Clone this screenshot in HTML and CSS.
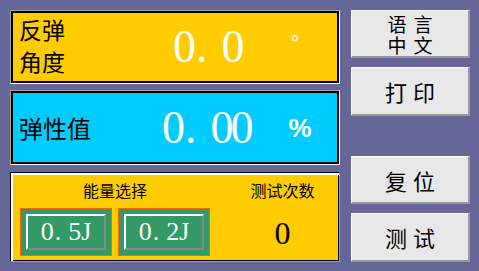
FILE: index.html
```html
<!DOCTYPE html>
<html lang="zh-CN">
<head>
    <meta charset="UTF-8">
    <title>回弹测试</title>
    <link rel="stylesheet" href="styles.css">
</head>
<body>
    <div class="screen">
        <div class="left">
            <!-- 反弹角度 -->
            <div class="panel panel-angle">
                <div class="label label-angle">反弹<br>角度</div>
                <div class="reading">0<span class="dot">.</span>0</div>
                <div class="unit-degree">°</div>
            </div>

            <!-- 弹性值 -->
            <div class="panel panel-elastic">
                <div class="label label-elastic">弹性值</div>
                <div class="reading">0<span class="dot">.</span>00</div>
                <div class="unit-percent">%</div>
            </div>

            <!-- 能量选择 / 测试次数 -->
            <div class="panel panel-count">
                <div class="energy">
                    <div class="title">能量选择</div>
                    <div class="energy-buttons">
                        <div class="energy-btn"><span>0<i>.</i>5J</span></div>
                        <div class="energy-btn"><span>0<i>.</i>2J</span></div>
                    </div>
                </div>
                <div class="counter">
                    <div class="title">测试次数</div>
                    <div class="count">0</div>
                </div>
            </div>
        </div>

        <div class="right">
            <button class="key key-lang"><span>语言</span><span>中文</span></button>
            <button class="key key-print">打印</button>
            <button class="key key-reset">复位</button>
            <button class="key key-test">测试</button>
        </div>
    </div>
</body>
</html>
```

FILE: styles.css
```css
body {
    margin: 0;
    width: 479px;
    height: 271px;
    overflow: hidden;
    background-color: #666699;
    font-family: "Noto Sans CJK SC", sans-serif;
}

.screen {
    display: flex;
    gap: 11px;
    padding: 10px 9px 0 10px;
}

.left {
    width: 330px;
    display: flex;
    flex-direction: column;
}

.panel {
    box-sizing: border-box;
    display: flex;
    align-items: center;
    padding-left: 8px;
    border: 1px solid;
    border-color: #a0a0a0 #fff #fff #a0a0a0;
    box-shadow: inset 0 0 0 2px #000;
}

.panel-angle {
    height: 74px;
    background-color: #ffcc00;
}

.panel-elastic {
    height: 75px;
    margin-top: 6px;
    background-color: #00ccff;
}

.panel-count {
    height: 90px;
    margin-top: 7px;
    background-color: #ffcc00;
    align-items: flex-start;
    padding-left: 9px;
    padding-top: 7px;
    border-color: #000 #a0a0a0 #a0a0a0 #000;
    box-shadow: inset 2px 2px 0 #fff, inset 0 0 0 1px #000;
}

.label {
    color: #000;
    flex-shrink: 0;
}

.label-angle {
    width: 154px;
    font-size: 23px;
    line-height: 32px;
    margin-top: -4px;
}

.label-elastic {
    width: 143px;
    font-size: 24px;
    line-height: 30px;
}

.reading {
    font-family: "Liberation Serif", serif;
    font-size: 46px;
    line-height: 46px;
    letter-spacing: -3px;
    color: #fff;
}

.reading .dot {
    margin: 0 17px 0 3px;
}

.unit-degree {
    align-self: flex-start;
    margin: 22px 0 0 49px;
    font-family: "Liberation Sans", sans-serif;
    font-size: 22px;
    line-height: 22px;
    color: #fff;
}

.unit-percent {
    margin-left: 38px;
    font-family: "Liberation Sans Narrow", "Liberation Sans", sans-serif;
    font-weight: bold;
    font-size: 26px;
    line-height: 26px;
    color: #fff;
}

.title {
    font-size: 16px;
    line-height: 20px;
    text-align: center;
    color: #000;
}

.energy {
    width: 190px;
}

.energy-buttons {
    display: flex;
    gap: 6px;
    margin-top: 8px;
}

.energy-btn {
    box-sizing: border-box;
    width: 92px;
    height: 48px;
    padding: 5px;
    border: 1px solid #ff6600;
    background-color: #339966;
}

.energy-btn span {
    box-sizing: border-box;
    display: flex;
    justify-content: center;
    align-items: center;
    height: 100%;
    border: 2px solid;
    border-color: #fff #888 #888 #fff;
    font-family: "Liberation Serif", serif;
    font-size: 26px;
    color: #fff;
}

.energy-btn i {
    font-style: normal;
    margin: 0 7px 0 1px;
}

.counter {
    width: 85px;
    margin-left: 30px;
    text-align: center;
}

.count {
    margin-top: 17px;
    font-family: "Liberation Serif", serif;
    font-size: 32px;
    line-height: 32px;
    color: #000;
}

.right {
    width: 119px;
    display: flex;
    flex-direction: column;
}

.key {
    box-sizing: border-box;
    width: 119px;
    height: 48px;
    padding: 0 0 0 6px;
    border: solid;
    border-width: 1px 2px 2px 1px;
    border-color: #fff #999 #999 #fff;
    background-color: #e8e8e8;
    font-family: "Noto Sans CJK SC", sans-serif;
    font-size: 22px;
    letter-spacing: 6px;
    color: #000;
}

.key-lang {
    display: flex;
    flex-direction: column;
    align-items: center;
    justify-content: center;
    font-size: 19px;
    line-height: 21px;
    letter-spacing: 7px;
    padding: 0 0 0 7px;
}

.key-print {
    height: 49px;
    margin-top: 9px;
}

.key-reset {
    margin-top: 40px;
}

.key-test {
    height: 49px;
    margin-top: 9px;
}
```
